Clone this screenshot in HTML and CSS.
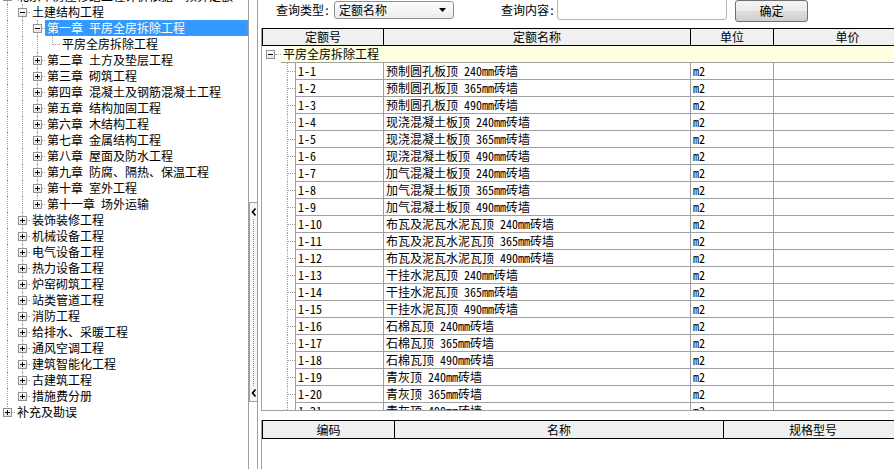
FILE: index.html
```html
<!DOCTYPE html>
<html lang="zh-CN">
<head>
<meta charset="utf-8">
<title>定额查询</title>
<link rel="stylesheet" href="styles.css">
</head>
<body>
<div class="app">
  <div class="tree">
    <div class="rows">
      <div class="row"><span class="c"><i class="box"></i></span><span class="lbl">北京市房屋修缮工程计价依据—预算定额</span></div>
      <div class="row"><span class="g v"></span><span class="c"><i class="box"></i></span><span class="lbl">土建结构工程</span></div>
      <div class="row"><span class="g v"></span><span class="g v"></span><span class="c"><i class="box"></i></span><span class="lbl sel">第一章 平房全房拆除工程</span></div>
      <div class="row"><span class="g v"></span><span class="g v"></span><span class="g v"></span><span class="c end"></span><span class="lbl">平房全房拆除工程</span></div>
      <div class="row"><span class="g v"></span><span class="g v"></span><span class="c"><i class="box plus"></i></span><span class="lbl">第二章 土方及垫层工程</span></div>
      <div class="row"><span class="g v"></span><span class="g v"></span><span class="c"><i class="box plus"></i></span><span class="lbl">第三章 砌筑工程</span></div>
      <div class="row"><span class="g v"></span><span class="g v"></span><span class="c"><i class="box plus"></i></span><span class="lbl">第四章 混凝土及钢筋混凝土工程</span></div>
      <div class="row"><span class="g v"></span><span class="g v"></span><span class="c"><i class="box plus"></i></span><span class="lbl">第五章 结构加固工程</span></div>
      <div class="row"><span class="g v"></span><span class="g v"></span><span class="c"><i class="box plus"></i></span><span class="lbl">第六章 木结构工程</span></div>
      <div class="row"><span class="g v"></span><span class="g v"></span><span class="c"><i class="box plus"></i></span><span class="lbl">第七章 金属结构工程</span></div>
      <div class="row"><span class="g v"></span><span class="g v"></span><span class="c"><i class="box plus"></i></span><span class="lbl">第八章 屋面及防水工程</span></div>
      <div class="row"><span class="g v"></span><span class="g v"></span><span class="c"><i class="box plus"></i></span><span class="lbl">第九章 防腐、隔热、保温工程</span></div>
      <div class="row"><span class="g v"></span><span class="g v"></span><span class="c"><i class="box plus"></i></span><span class="lbl">第十章 室外工程</span></div>
      <div class="row"><span class="g v"></span><span class="g v"></span><span class="c end"><i class="box plus"></i></span><span class="lbl">第十一章 场外运输</span></div>
      <div class="row"><span class="g v"></span><span class="c"><i class="box plus"></i></span><span class="lbl">装饰装修工程</span></div>
      <div class="row"><span class="g v"></span><span class="c"><i class="box plus"></i></span><span class="lbl">机械设备工程</span></div>
      <div class="row"><span class="g v"></span><span class="c"><i class="box plus"></i></span><span class="lbl">电气设备工程</span></div>
      <div class="row"><span class="g v"></span><span class="c"><i class="box plus"></i></span><span class="lbl">热力设备工程</span></div>
      <div class="row"><span class="g v"></span><span class="c"><i class="box plus"></i></span><span class="lbl">炉窑砌筑工程</span></div>
      <div class="row"><span class="g v"></span><span class="c"><i class="box plus"></i></span><span class="lbl">站类管道工程</span></div>
      <div class="row"><span class="g v"></span><span class="c"><i class="box plus"></i></span><span class="lbl">消防工程</span></div>
      <div class="row"><span class="g v"></span><span class="c"><i class="box plus"></i></span><span class="lbl">给排水、采暖工程</span></div>
      <div class="row"><span class="g v"></span><span class="c"><i class="box plus"></i></span><span class="lbl">通风空调工程</span></div>
      <div class="row"><span class="g v"></span><span class="c"><i class="box plus"></i></span><span class="lbl">建筑智能化工程</span></div>
      <div class="row"><span class="g v"></span><span class="c"><i class="box plus"></i></span><span class="lbl">古建筑工程</span></div>
      <div class="row"><span class="g v"></span><span class="c end"><i class="box plus"></i></span><span class="lbl">措施费分册</span></div>
      <div class="row"><span class="c end"><i class="box plus"></i></span><span class="lbl">补充及勘误</span></div>
    </div>
  </div>

  <div class="splitter">
    <div class="handle">
      <svg class="arrow" width="6" height="8" viewBox="0 0 6 8"><polyline points="4.5,0.5 1.5,4 4.5,7.5" fill="none" stroke="#000" stroke-width="1.6"/></svg>
      <div class="dots"></div>
      <svg class="arrow" width="6" height="8" viewBox="0 0 6 8"><polyline points="4.5,0.5 1.5,4 4.5,7.5" fill="none" stroke="#000" stroke-width="1.6"/></svg>
    </div>
  </div>

  <div class="main">
    <div class="toolbar">
      <span class="label first">查询类型:</span>
      <div class="combo"><span class="combo-text">定额名称</span><svg class="caret" width="7" height="4" viewBox="0 0 7 4"><polygon points="0,0 7,0 3.5,4" fill="#000"/></svg></div>
      <span class="label second">查询内容:</span>
      <div class="input"></div>
      <div class="btn">确定</div>
    </div>

    <div class="grid">
      <div class="ghead">
        <div class="hc w1">定额号</div>
        <div class="hc w2">定额名称</div>
        <div class="hc w3">单位</div>
        <div class="hc w4">单价</div>
      </div>
      <div class="grow">
        <div class="gtree"><i class="box"></i></div>
        <div class="gname">平房全房拆除工程</div>
      </div>
      <div class="drow"><div class="dtree"></div><div class="dc c1">1-1</div><div class="dc c2">预制圆孔板顶 240mm砖墙</div><div class="dc c3">m2</div><div class="dc c4"></div></div>
      <div class="drow"><div class="dtree"></div><div class="dc c1">1-2</div><div class="dc c2">预制圆孔板顶 365mm砖墙</div><div class="dc c3">m2</div><div class="dc c4"></div></div>
      <div class="drow"><div class="dtree"></div><div class="dc c1">1-3</div><div class="dc c2">预制圆孔板顶 490mm砖墙</div><div class="dc c3">m2</div><div class="dc c4"></div></div>
      <div class="drow"><div class="dtree"></div><div class="dc c1">1-4</div><div class="dc c2">现浇混凝土板顶 240mm砖墙</div><div class="dc c3">m2</div><div class="dc c4"></div></div>
      <div class="drow"><div class="dtree"></div><div class="dc c1">1-5</div><div class="dc c2">现浇混凝土板顶 365mm砖墙</div><div class="dc c3">m2</div><div class="dc c4"></div></div>
      <div class="drow"><div class="dtree"></div><div class="dc c1">1-6</div><div class="dc c2">现浇混凝土板顶 490mm砖墙</div><div class="dc c3">m2</div><div class="dc c4"></div></div>
      <div class="drow"><div class="dtree"></div><div class="dc c1">1-7</div><div class="dc c2">加气混凝土板顶 240mm砖墙</div><div class="dc c3">m2</div><div class="dc c4"></div></div>
      <div class="drow"><div class="dtree"></div><div class="dc c1">1-8</div><div class="dc c2">加气混凝土板顶 365mm砖墙</div><div class="dc c3">m2</div><div class="dc c4"></div></div>
      <div class="drow"><div class="dtree"></div><div class="dc c1">1-9</div><div class="dc c2">加气混凝土板顶 490mm砖墙</div><div class="dc c3">m2</div><div class="dc c4"></div></div>
      <div class="drow"><div class="dtree"></div><div class="dc c1">1-10</div><div class="dc c2">布瓦及泥瓦水泥瓦顶 240mm砖墙</div><div class="dc c3">m2</div><div class="dc c4"></div></div>
      <div class="drow"><div class="dtree"></div><div class="dc c1">1-11</div><div class="dc c2">布瓦及泥瓦水泥瓦顶 365mm砖墙</div><div class="dc c3">m2</div><div class="dc c4"></div></div>
      <div class="drow"><div class="dtree"></div><div class="dc c1">1-12</div><div class="dc c2">布瓦及泥瓦水泥瓦顶 490mm砖墙</div><div class="dc c3">m2</div><div class="dc c4"></div></div>
      <div class="drow"><div class="dtree"></div><div class="dc c1">1-13</div><div class="dc c2">干挂水泥瓦顶 240mm砖墙</div><div class="dc c3">m2</div><div class="dc c4"></div></div>
      <div class="drow"><div class="dtree"></div><div class="dc c1">1-14</div><div class="dc c2">干挂水泥瓦顶 365mm砖墙</div><div class="dc c3">m2</div><div class="dc c4"></div></div>
      <div class="drow"><div class="dtree"></div><div class="dc c1">1-15</div><div class="dc c2">干挂水泥瓦顶 490mm砖墙</div><div class="dc c3">m2</div><div class="dc c4"></div></div>
      <div class="drow"><div class="dtree"></div><div class="dc c1">1-16</div><div class="dc c2">石棉瓦顶 240mm砖墙</div><div class="dc c3">m2</div><div class="dc c4"></div></div>
      <div class="drow"><div class="dtree"></div><div class="dc c1">1-17</div><div class="dc c2">石棉瓦顶 365mm砖墙</div><div class="dc c3">m2</div><div class="dc c4"></div></div>
      <div class="drow"><div class="dtree"></div><div class="dc c1">1-18</div><div class="dc c2">石棉瓦顶 490mm砖墙</div><div class="dc c3">m2</div><div class="dc c4"></div></div>
      <div class="drow"><div class="dtree"></div><div class="dc c1">1-19</div><div class="dc c2">青灰顶 240mm砖墙</div><div class="dc c3">m2</div><div class="dc c4"></div></div>
      <div class="drow"><div class="dtree"></div><div class="dc c1">1-20</div><div class="dc c2">青灰顶 365mm砖墙</div><div class="dc c3">m2</div><div class="dc c4"></div></div>
      <div class="drow"><div class="dtree"></div><div class="dc c1">1-21</div><div class="dc c2">青灰顶 490mm砖墙</div><div class="dc c3">m2</div><div class="dc c4"></div></div>
    </div>

    <div class="grid2">
      <div class="ghead tall">
        <div class="hc b1">编码</div>
        <div class="hc b2">名称</div>
        <div class="hc b3">规格型号</div>
      </div>
    </div>
  </div>
</div>
</body>
</html>
```
FILE: styles.css
```css
* { box-sizing: border-box; }
html, body { margin: 0; padding: 0; }
body {
  width: 894px;
  height: 469px;
  overflow: hidden;
  background: #fff;
  color: #000;
  font-family: "Noto Sans Mono CJK SC", "Noto Sans CJK SC", sans-serif;
  font-size: 12px;
}
.app { display: flex; height: 469px; }

/* ---------- left tree ---------- */
.tree { width: 248px; flex: none; overflow: hidden; }
.rows { margin-top: -12px; }
.row { display: flex; height: 16px; line-height: 16px; white-space: nowrap; }
.g, .c { width: 15px; height: 16px; flex: none; position: relative; }
.g.v::before, .c::before {
  content: ""; position: absolute; left: 7px; top: 0; height: 16px;
  border-left: 1px dotted #a0a0a0;
}
.c.end::before { height: 9px; }
.c::after {
  content: ""; position: absolute; left: 8px; top: 8px; width: 7px;
  border-top: 1px dotted #a0a0a0;
}
.box {
  position: absolute; left: 3px; top: 4px; width: 9px; height: 9px;
  border: 1px solid #919191; background: linear-gradient(#ffffff, #e4e4e4);
  z-index: 1;
}
.box::before {
  content: ""; position: absolute; left: 1px; top: 3px; width: 5px; height: 1px; background: #000;
}
.box.plus::after {
  content: ""; position: absolute; left: 3px; top: 1px; width: 1px; height: 5px; background: #000;
}
.lbl { flex: 1; padding-left: 2px; }
.lbl.sel {
  background: #3399ff; color: #fff;
  outline: 1px dotted #d08030; outline-offset: -1px;
}

/* ---------- splitter ---------- */
.splitter {
  width: 10px; flex: none;
  border-left: 1px solid #a0a0a0; border-right: 1px solid #a0a0a0;
  padding-top: 202px;
}
.handle {
  height: 200px; background: #f7f7f7;
  border: 1px solid #a0a0a0; border-right: none;
  display: flex; flex-direction: column; align-items: center;
  padding: 5px 0 4px;
}
.arrow { display: block; flex: none; }
.dots { flex: 1; width: 0; margin: 3px 0; border-left: 1px dotted #3399ff; }

/* ---------- main ---------- */
.main { flex: 1; min-width: 0; overflow: hidden; }
.toolbar { height: 28px; display: flex; align-items: flex-start; white-space: nowrap; }
.label { line-height: 20px; }
.label.first { margin-left: 18px; }
.label.second { margin-left: 47px; }
.combo {
  margin: 1px 0 0 4px; width: 120px; height: 18px;
  border: 1px solid #8e8f8f; border-radius: 3px;
  background: linear-gradient(#fdfdfd, #ececec);
  display: flex; align-items: center; justify-content: space-between;
  padding: 0 7px 0 4px; line-height: 16px;
}
.caret { display: block; }
.input {
  margin: -2px 0 0 2px; width: 170px; height: 22px;
  border: 1px solid #b5b5b5; border-radius: 3px; background: #fff;
}
.btn {
  margin: 0 0 0 8px; width: 73px; height: 22px;
  border: 1px solid #707070; border-radius: 3px;
  background: linear-gradient(#f4f4f4 0%, #ebebeb 50%, #dddddd 51%, #cfcfcf 100%);
  text-align: center; line-height: 20px;
}

/* ---------- grids ---------- */
.grid {
  margin-left: 3px; width: 660px; height: 383px; overflow: hidden;
  border-left: 1px solid #a0a0a0; border-bottom: 1px solid #a0a0a0;
}
.ghead {
  display: flex; height: 18px;
  border-top: 1px solid #000; border-bottom: 1px solid #000; border-left: 1px solid #000;
  background: #f0f0f0;
}
.ghead.tall { height: 19px; }
.hc { flex: none; text-align: center; border-right: 1px solid #000; line-height: 16px; }
.ghead.tall .hc { line-height: 17px; }
.w1 { width: 121px; }
.w2 { width: 307px; }
.w3 { width: 83px; }
.w4 { width: 148px; }

.grow { display: flex; height: 17px; }
.gtree { width: 19px; flex: none; position: relative; }
.gtree::after {
  content: ""; position: absolute; left: 13px; top: 8px; width: 6px;
  border-top: 1px dotted #a0a0a0;
}
.gtree .box { top: 4px; left: 4px; }
.gname {
  flex: 1; background: #ffffe1; border-bottom: 1px solid #a0a0a0;
  line-height: 16px; padding-left: 2px;
}

.drow { display: flex; height: 17px; line-height: 16px; white-space: nowrap; }
.dtree { width: 33px; flex: none; position: relative; }
.dtree::before {
  content: ""; position: absolute; left: 25px; top: 0; height: 17px;
  border-left: 1px dotted #a0a0a0;
}
.dtree::after {
  content: ""; position: absolute; left: 26px; top: 8px; width: 7px;
  border-top: 1px dotted #a0a0a0;
}
.dc {
  flex: none; border-left: 1px solid #a0a0a0; border-bottom: 1px solid #a0a0a0;
  padding-left: 2px; overflow: hidden;
}
.c1 { width: 88px; }
.c2 { width: 307px; }
.c3 { width: 83px; }
.c4 { width: 148px; }

.grid2 {
  margin: 9px 0 0 3px; width: 660px; height: 49px;
  border-left: 1px solid #a0a0a0;
}
.b1 { width: 132px; }
.b2 { width: 329px; }
.b3 { width: 179px; }
```
